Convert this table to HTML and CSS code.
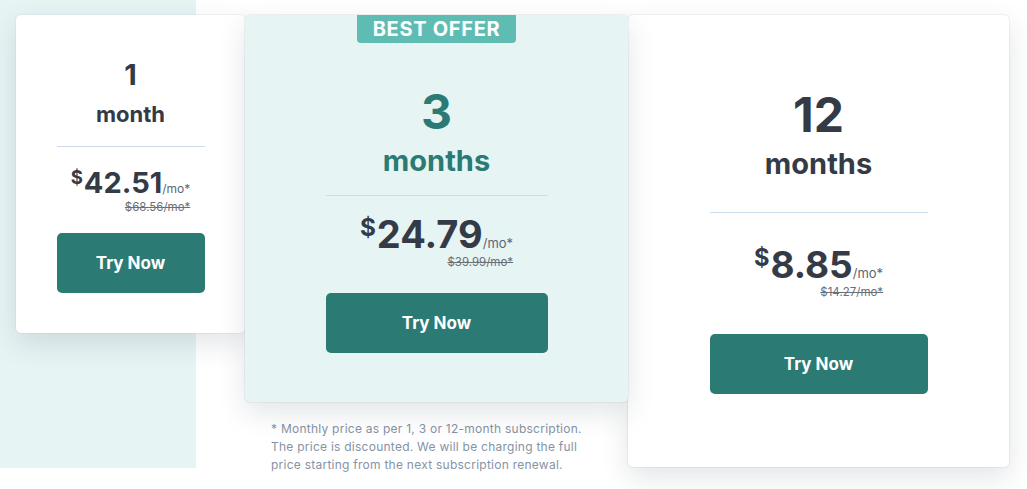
FILE: index.html
```html
<!DOCTYPE html>
<html lang="en">
<head>
<meta charset="utf-8">
<title>Pricing</title>
<link rel="stylesheet" href="styles.css">
</head>
<body>
<div class="pricing">
  <div class="card card-one">
    <div class="term">1</div>
    <div class="unit">month</div>
    <div class="divider"></div>
    <div class="price-block">
      <div class="price"><span class="cur">$</span><span class="amt">42.51</span><span class="per">/mo*</span></div>
      <div class="old">$68.56/mo*</div>
    </div>
    <a class="btn" href="#">Try Now</a>
  </div>

  <div class="col-best">
    <div class="card card-best">
      <div class="badge">BEST OFFER</div>
      <div class="term term-lg">3</div>
      <div class="unit unit-lg">months</div>
      <div class="divider"></div>
      <div class="price-block">
        <div class="price price-lg"><span class="cur">$</span><span class="amt">24.79</span><span class="per">/mo*</span></div>
        <div class="old">$39.99/mo*</div>
      </div>
      <a class="btn" href="#">Try Now</a>
    </div>
    <p class="note">* Monthly price as per 1, 3 or 12-month subscription.<br>The price is discounted. We will be charging the full<br>price starting from the next subscription renewal.</p>
  </div>

  <div class="card card-year">
    <div class="term term-lg">12</div>
    <div class="unit unit-lg">months</div>
    <div class="divider"></div>
    <div class="price-block">
      <div class="price price-lg"><span class="cur">$</span><span class="amt">8.85</span><span class="per">/mo*</span></div>
      <div class="old">$14.27/mo*</div>
    </div>
    <a class="btn" href="#">Try Now</a>
  </div>
</div>
</body>
</html>
```

FILE: styles.css
```css
* { box-sizing: border-box; }

html, body {
  margin: 0;
  background: #ffffff;
}

body {
  font-family: Inter, "Noto Sans", "Liberation Sans", sans-serif;
  color: #343a46;
}

.pricing {
  display: flex;
  align-items: flex-start;
  min-height: 489px;
  padding: 15px 0 21px 16px;
  background: #ffffff linear-gradient(#e6f4f4, #e6f4f4) no-repeat 0 0 / 196px 468px;
}

.card {
  display: flex;
  flex-direction: column;
  align-items: center;
  background: #ffffff;
  border-radius: 5px;
  box-shadow: 0 10px 28px rgba(30, 50, 60, 0.13), 0 0 0 1px rgba(200, 210, 225, 0.25);
}

.card-one {
  width: 229px;
  padding: 43px 0 40px;
  position: relative;
  z-index: 1;
}

.col-best {
  width: 383px;
  display: flex;
  flex-direction: column;
}

.card-best {
  width: 383px;
  background: #e6f4f4;
  padding: 0 0 49px;
  position: relative;
  z-index: 2;
}

.card-year {
  width: 381px;
  padding: 72px 0 73px;
  position: relative;
  z-index: 1;
}

.badge {
  width: 159px;
  height: 28px;
  background: #5fbcb3;
  color: #ffffff;
  font-weight: 700;
  font-size: 20px;
  line-height: 28px;
  letter-spacing: 0.7px;
  text-align: center;
  border-radius: 0 0 4px 4px;
  margin-bottom: 41px;
}

.term {
  font-size: 29px;
  line-height: 34px;
  font-weight: 700;
}

.unit {
  font-size: 22px;
  line-height: 26px;
  font-weight: 700;
  margin-top: 9px;
}

.term-lg {
  font-size: 48px;
  line-height: 56px;
}

.unit-lg {
  font-size: 29px;
  line-height: 34px;
  margin-top: 4px;
}

.card-best .term,
.card-best .unit {
  color: #2b7a73;
}

.divider {
  height: 1px;
  background: #cbdcec;
  width: 148px;
  margin-top: 19px;
}

.card-best .divider { margin-top: 17px; width: 222px; }
.card-year .divider { margin-top: 31px; width: 218px; }

.price-block {
  display: flex;
  flex-direction: column;
  align-items: flex-end;
  margin-top: 21px;
}

.card-best .price-block { margin-top: 19px; }
.card-year .price-block { margin-top: 33px; }

.price {
  display: flex;
  align-items: baseline;
  font-size: 29px;
  line-height: 1;
  font-weight: 700;
  white-space: nowrap;
}

.price-lg {
  font-size: 38px;
}

.card-year .price-lg { font-size: 37px; }

.cur {
  align-self: flex-start;
  font-size: 0.64em;
  line-height: 1;
  margin-right: 1px;
}

.per {
  font-size: 12px;
  font-weight: 400;
  color: #5b6675;
}

.price-lg .per { font-size: 13px; }

.old {
  font-size: 11.5px;
  line-height: 14px;
  color: #6b6f76;
  text-decoration: line-through;
  margin-top: 3px;
}

.card-best .old,
.card-year .old { margin-top: 2px; }

.btn {
  display: flex;
  align-items: center;
  justify-content: center;
  width: 148px;
  height: 60px;
  margin-top: 19px;
  background: #2b7a73;
  color: #ffffff;
  border-radius: 5px;
  font-size: 17px;
  font-weight: 700;
  text-decoration: none;
}

.card-best .btn { width: 222px; margin-top: 24px; }
.card-year .btn { width: 218px; margin-top: 35px; }

.note {
  margin: 18px 0 0;
  padding-left: 26px;
  font-size: 12px;
  line-height: 18px;
  letter-spacing: 0.25px;
  color: #8693a5;
}
```
